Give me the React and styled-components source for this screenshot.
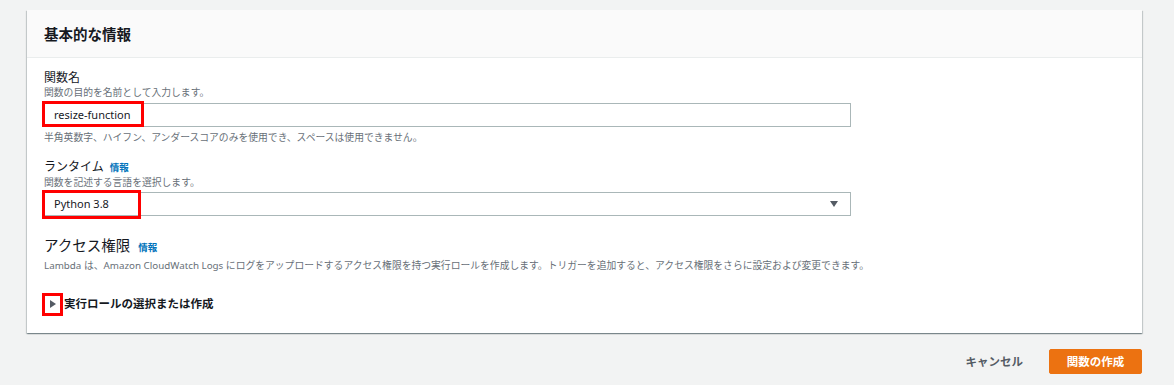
import styled, { createGlobalStyle } from 'styled-components'

const GlobalStyle = createGlobalStyle`
  html, body {
    margin: 0;
    padding: 0;
    background: #f2f3f3;
  }
  body {
    font-family: "Noto Sans", "Noto Sans CJK JP", sans-serif;
    color: #16191f;
  }
`

function App() {
  return (
    <>
      <GlobalStyle />
      <Page>
        <Card>
          <CardHeader>
            <Title>基本的な情報</Title>
          </CardHeader>
          <CardBody>
            <Field>
              <Label>関数名</Label>
              <Description>関数の目的を名前として入力します。</Description>
              <ControlWrap>
                <TextInput defaultValue="resize-function" />
                <Highlight width={102} height={26} />
              </ControlWrap>
              <Hint>半角英数字、ハイフン、アンダースコアのみを使用でき、スペースは使用できません。</Hint>
            </Field>

            <Field spaced>
              <Label>
                ランタイム <InfoLink>情報</InfoLink>
              </Label>
              <Description>関数を記述する言語を選択します。</Description>
              <ControlWrap top={2}>
                <Select>
                  <span>Python 3.8</span>
                  <Caret />
                </Select>
                <Highlight width={99} height={29} top={-2} />
              </ControlWrap>
            </Field>

            <Field spaced>
              <SectionLabel>
                アクセス権限 <InfoLink>情報</InfoLink>
              </SectionLabel>
              <Description top={1}>
                Lambda は、Amazon CloudWatch Logs にログをアップロードするアクセス権限を持つ実行ロールを作成します。トリガーを追加すると、アクセス権限をさらに設定および変更できます。
              </Description>
            </Field>

            <Toggle>
              <ToggleIcon>
                <Arrow />
              </ToggleIcon>
              <ToggleText>実行ロールの選択または作成</ToggleText>
            </Toggle>
          </CardBody>
        </Card>

        <Actions>
          <CancelButton>キャンセル</CancelButton>
          <PrimaryButton>関数の作成</PrimaryButton>
        </Actions>
      </Page>
    </>
  )
}

export default App

const Page = styled.div`
  padding: 10px 32px 12px 27px;
`
const Card = styled.div`
  background: #fff;
  box-shadow: 0 1px 1px 0 rgba(0, 28, 36, 0.3), 1px 1px 1px 0 rgba(0, 28, 36, 0.15),
    -1px 1px 1px 0 rgba(0, 28, 36, 0.15);
`
const CardHeader = styled.div`
  display: flex;
  align-items: center;
  height: 47px;
  padding: 0 17px;
  background: #fafafa;
  border-bottom: 1px solid #eaeded;
`
const Title = styled.h2`
  margin: 0;
  font-size: 14.5px;
  font-weight: 700;
  line-height: 20px;
  color: #16191f;
`
const CardBody = styled.div`
  padding: 12px 15px 17px;
`
const Field = styled.div`
  display: flex;
  flex-direction: column;
  margin-top: ${(p) => (p.spaced ? '14px' : '0')};
`
const Label = styled.div`
  display: flex;
  align-items: baseline;
  gap: 6px;
  font-size: 12px;
  line-height: 16px;
  padding-left: 2px;
  color: #16191f;
`
const SectionLabel = styled(Label)`
  font-size: 14.5px;
  line-height: 20px;
  margin-top: 5px;
  gap: 8px;
`
const InfoLink = styled.a`
  font-size: 9.5px;
  font-weight: 700;
  color: #0073bb;
  cursor: pointer;
`
const Description = styled.div`
  font-size: 9.8px;
  line-height: 14px;
  color: #687078;
  padding-left: 2px;
  margin-top: ${(p) => (p.top ? `${p.top}px` : '0')};
`
const Hint = styled(Description)`
  margin-top: 4px;
`
const ControlWrap = styled.div`
  position: relative;
  width: 809px;
  margin-top: ${(p) => (p.top !== undefined ? `${p.top}px` : '2px')};
`
const TextInput = styled.input`
  box-sizing: border-box;
  width: 100%;
  height: 24px;
  padding: 0 11px;
  border: 1px solid #aab7b8;
  border-radius: 0;
  font-family: "Noto Sans", "Noto Sans CJK JP", sans-serif;
  font-size: 11px;
  color: #16191f;
  outline: none;
`
const Select = styled.div`
  box-sizing: border-box;
  display: flex;
  align-items: center;
  justify-content: space-between;
  height: 24px;
  padding: 0 12px 0 11px;
  border: 1px solid #aab7b8;
  font-size: 11px;
  color: #16191f;
`
const Caret = styled.span`
  width: 0;
  height: 0;
  border-left: 4px solid transparent;
  border-right: 4px solid transparent;
  border-top: 6px solid #545b64;
`
const Highlight = styled.span`
  position: absolute;
  left: 0;
  top: ${(p) => (p.top !== undefined ? `${p.top}px` : '-1px')};
  box-sizing: border-box;
  width: ${(p) => p.width}px;
  height: ${(p) => p.height}px;
  border: 3px solid #ff0000;
  pointer-events: none;
`
const Toggle = styled.div`
  display: flex;
  align-items: center;
  margin-top: 20px;
`
const ToggleIcon = styled.span`
  box-sizing: border-box;
  display: flex;
  align-items: center;
  justify-content: center;
  width: 21px;
  height: 23px;
  border: 3px solid #ff0000;
`
const Arrow = styled.span`
  width: 0;
  height: 0;
  border-top: 4px solid transparent;
  border-bottom: 4px solid transparent;
  border-left: 6px solid #545b64;
`
const ToggleText = styled.span`
  margin-left: 1px;
  font-size: 11.5px;
  font-weight: 700;
  line-height: 16px;
  color: #16191f;
`
const Actions = styled.div`
  display: flex;
  justify-content: flex-end;
  align-items: center;
  gap: 6px;
  margin-top: 16px;
`
const CancelButton = styled.button`
  height: 25px;
  padding: 0 20px;
  border: none;
  background: transparent;
  font-family: "Noto Sans", "Noto Sans CJK JP", sans-serif;
  font-size: 11.5px;
  font-weight: 700;
  color: #545b64;
  cursor: pointer;
`
const PrimaryButton = styled.button`
  box-sizing: border-box;
  height: 25px;
  width: 93px;
  padding: 0;
  border: 1px solid #ec7211;
  border-radius: 2px;
  background: #ec7211;
  font-family: "Noto Sans", "Noto Sans CJK JP", sans-serif;
  font-size: 11.5px;
  font-weight: 700;
  color: #fff;
  cursor: pointer;
`
